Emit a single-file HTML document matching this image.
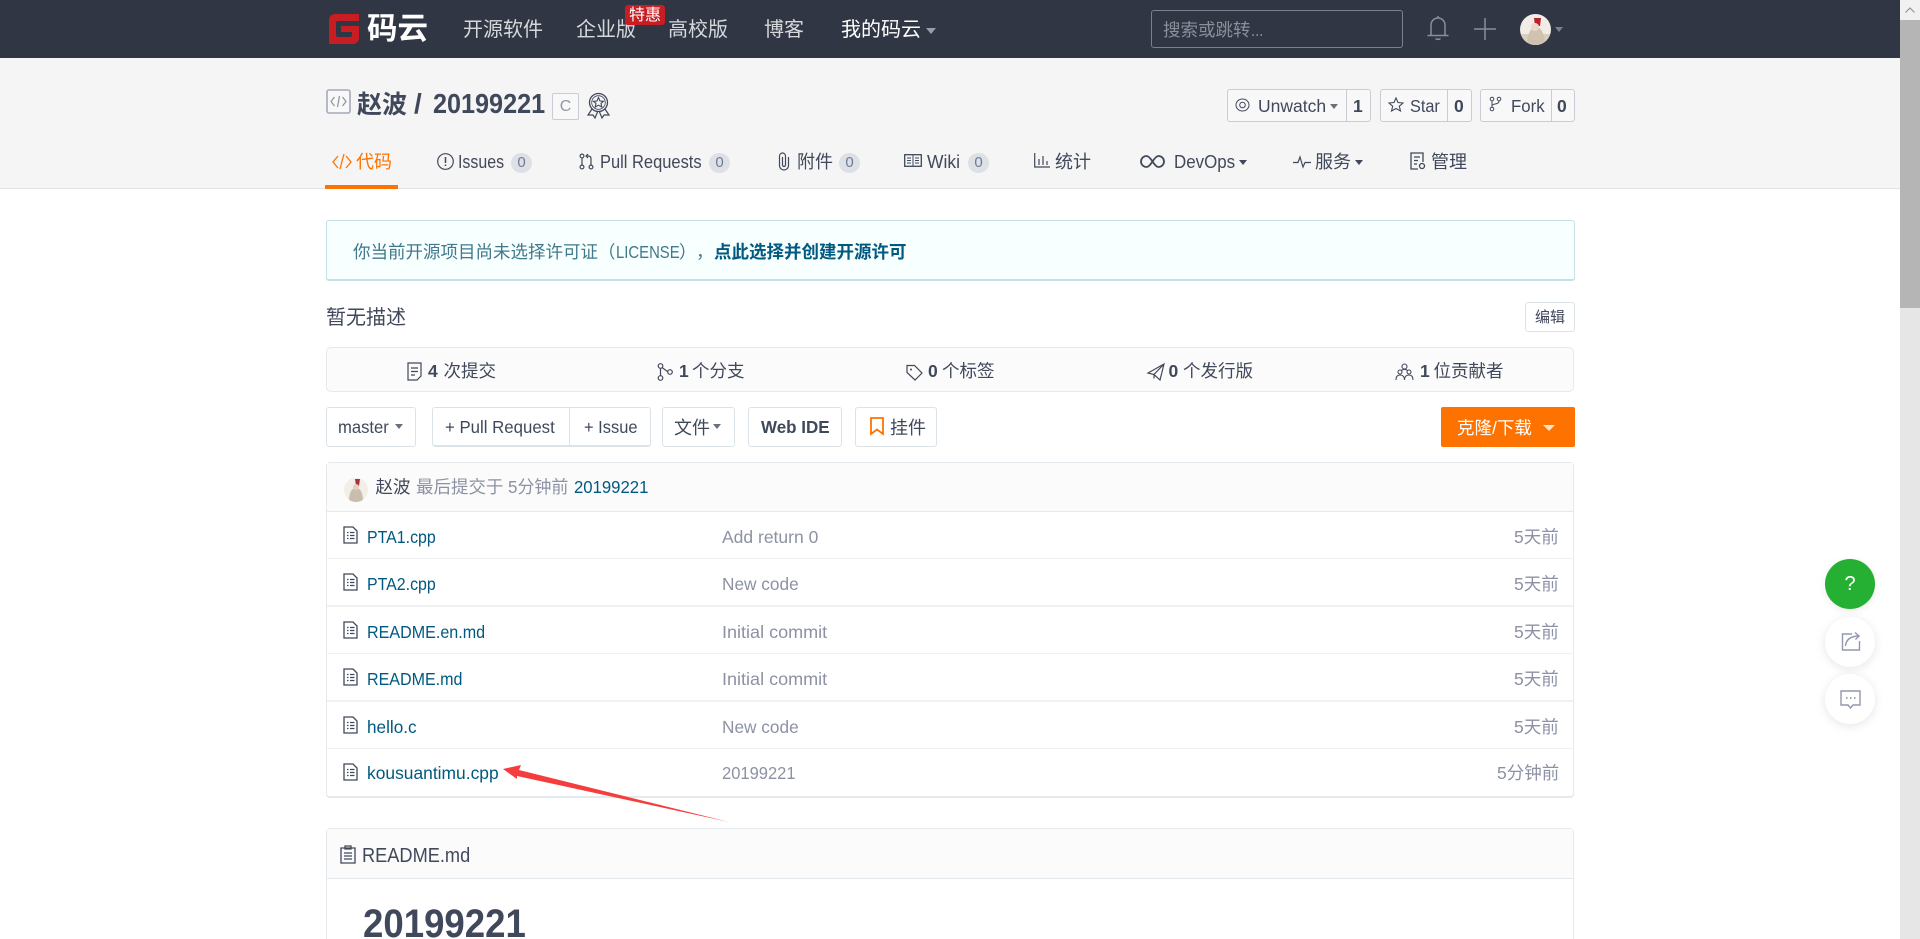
<!DOCTYPE html>
<html lang="zh-CN"><head><meta charset="utf-8"><title>赵波 / 20199221</title>
<style>
html,body{margin:0;padding:0;width:1920px;height:939px;overflow:hidden;background:#fff}
body{position:relative;font-family:"Liberation Sans","Noto Sans CJK SC",sans-serif;color:#40485b;font-size:17.5px}
.a,.t,svg.i{position:absolute}
.a{box-sizing:border-box}
.t{white-space:nowrap;line-height:1;transform-origin:0 50%}
svg.i{overflow:visible;fill:none}
.btn{position:absolute;box-sizing:border-box;background:#fff;border:1px solid #dce3e8;border-radius:3px}
.sbtn{position:absolute;box-sizing:border-box;background:#f8f8f8;border:1px solid #c9ccd6;border-radius:3px}
.car{position:absolute;width:0;height:0;border-left:4.5px solid transparent;border-right:4.5px solid transparent;border-top:5px solid #6a6f7c}
.bd{position:absolute;width:21px;height:20px;border-radius:50%;background:#dde0e5;color:#6f7c96;font-size:15px;line-height:20px;text-align:center}
.lnk{color:#005980}.gr{color:#8c92a4}
.line{position:absolute;left:327px;width:1246px;height:1px;background:#f0f1f3}
</style></head><body>
<svg width="0" height="0" style="position:absolute"><symbol id="file" viewBox="0 0 15 18"><path d="M1 1H10L14 5V17H1Z" fill="none" stroke="#40485b" stroke-width="1.3"/><path d="M4 6.5H5.5M7 6.5H11.5M4 9.5H5.5M7 9.5H11.5M4 12.5H5.5M7 12.5H11.5" stroke="#40485b" stroke-width="1.3" fill="none"/></symbol></svg>

<!-- top bar -->
<div class="a" style="left:0;top:0;width:1920px;height:58px;background:#303643"></div>
<svg class="i" style="left:329px;top:14px" width="30" height="30" viewBox="0 0 30 30"><path d="M6 0H30V7H9a2 2 0 0 0-2 2V21a2 2 0 0 0 2 2H21a2 2 0 0 0 2-2V18H12V12H30V24a6 6 0 0 1-6 6H0V6a6 6 0 0 1 6-6Z" fill="#c71d23"/></svg>
<div class="t" style="left:367px;top:14px;font-size:30.5px;font-weight:bold;color:#fff">码云</div>
<div class="t" style="left:463px;top:20px;font-size:20px;color:#d6d8dc">开源软件</div>
<div class="t" style="left:576px;top:20px;font-size:20px;color:#d6d8dc">企业版</div>
<div class="a" style="left:625px;top:5px;width:40px;height:20px;background:#c71d23;border-radius:3px"></div>
<div class="t" style="left:629px;top:7.5px;font-size:16px;color:#fff">特惠</div>
<div class="t" style="left:668px;top:20px;font-size:20px;color:#d6d8dc">高校版</div>
<div class="t" style="left:764px;top:20px;font-size:20px;color:#d6d8dc">博客</div>
<div class="t" style="left:841px;top:20px;font-size:20px;color:#fff">我的码云</div>
<div class="car" style="left:926px;top:28px;border-top-color:#9a9ea8;border-left-width:5px;border-right-width:5px;border-top-width:6px"></div>
<div class="a" style="left:1151px;top:10px;width:252px;height:38px;border:1px solid #7b808c;border-radius:3px"></div>
<div class="t" style="left:1163px;top:22px;font-size:17.5px;color:#8b8f9a">搜索或跳转</div>
<div class="t" style="left:1251px;top:22px;font-size:17.5px;color:#8b8f9a;transform:scaleX(.85)">...</div>
<svg class="i" style="left:1426px;top:15px" width="24" height="27" viewBox="0 0 24 27"><path d="M5 20V10a7 7 0 0 1 14 0V20M1.500 20.500H22.500M12 1V3M9.500 23.500a3 2 0 0 0 5 0" stroke="#8a8e9a" stroke-width="1.500"/></svg>
<svg class="i" style="left:1474px;top:18px" width="22" height="22" viewBox="0 0 22 22"><path d="M0 11H22M11 0V22" stroke="#8a8e9a" stroke-width="1.500"/></svg>
<svg class="i" style="left:1520px;top:14px" width="31" height="31" viewBox="0 0 31 31"><clipPath id="av1"><circle cx="15.500" cy="15.500" r="15.500"/></clipPath><g clip-path="url(#av1)"><rect width="31" height="31" fill="#f1ece6"/><rect x="0" y="20" width="31" height="11" fill="#d9cfc0"/><path d="M7 31C7 20 11 13 16 13S25 20 25 31Z" fill="#cfc3b0"/><path d="M14 4H21L20 12H15Z" fill="#b8222c"/><circle cx="15" cy="13" r="4" fill="#eed6c8"/></g></svg>
<div class="car" style="left:1555px;top:27px;border-top-color:#7b808c"></div>

<!-- project header -->
<div class="a" style="left:0;top:58px;width:1920px;height:131px;background:#f5f5f5;border-bottom:1.500px solid #e3e3e3"></div>
<svg class="i" style="left:326px;top:89px" width="25" height="25" viewBox="0 0 25 25"><rect x="1" y="1" width="23" height="23" rx="2" stroke="#a4aabb" stroke-width="1.600" fill="#f8f8f8"/><path d="M8.500 8L5 12.500L8.500 17M16.500 8L20 12.500L16.500 17M13.500 7L11.500 18" stroke="#8c92a4" stroke-width="1.200"/></svg>
<div class="t" style="left:357px;top:92.500px;font-size:25px;font-weight:bold">赵波</div>
<div class="t" style="left:414px;top:90px;font-size:28px;font-weight:bold">/</div>
<div class="t" style="left:432.500px;top:90px;font-size:28px;font-weight:bold;transform:scaleX(.9)">20199221</div>
<div class="a" style="left:552px;top:93px;width:27px;height:27px;border:1.500px solid #c9ccd6;border-radius:2px;background:#f8f8f8;color:#9298a8;font-size:16px;line-height:25px;text-align:center">C</div>
<svg class="i" style="left:586px;top:92px" width="25" height="27" viewBox="0 0 25 27"><circle cx="12.500" cy="10.500" r="9" stroke="#40485b" stroke-width="1.300"/><circle cx="12.500" cy="10.500" r="6.800" stroke="#40485b" stroke-width=".8"/><path d="M12.500 5.500L14 9L17.500 9.300L15 11.500L15.800 15L12.500 13.200L9.200 15L10 11.500L7.500 9.300L11 9Z" stroke="#40485b" stroke-width="1.100"/><path d="M6 17L2 23L7 23L9 26L11.500 20M19 17L23 23L18 23L16 26L13.500 20" stroke="#40485b" stroke-width="1.200"/></svg>

<!-- watch/star/fork -->
<div class="sbtn" style="left:1226.500px;top:89px;width:144px;height:33px"></div>
<div class="a" style="left:1345.500px;top:89px;width:1px;height:33px;background:#c9ccd6"></div>
<svg class="i" style="left:1235px;top:98px" width="15" height="14" viewBox="0 0 15 14"><ellipse cx="7.500" cy="7" rx="6.500" ry="6" stroke="#40485b"/><circle cx="7.500" cy="7" r="2.800" stroke="#40485b"/></svg>
<div class="t" style="left:1258px;top:98px">Unwatch</div>
<div class="car" style="left:1330px;top:104px"></div>
<div class="t" style="left:1353px;top:98px;font-weight:bold">1</div>
<div class="sbtn" style="left:1380px;top:89px;width:91.500px;height:33px"></div>
<div class="a" style="left:1447px;top:89px;width:1px;height:33px;background:#c9ccd6"></div>
<svg class="i" style="left:1388px;top:97px" width="16" height="15" viewBox="0 0 16 15"><path d="M8 1L10 5.500L15 6L11.300 9.200L12.500 14L8 11.500L3.500 14L4.700 9.200L1 6L6 5.500Z" stroke="#40485b" stroke-width="1.100"/></svg>
<div class="t" style="left:1410px;top:98px;transform:scaleX(.93)">Star</div>
<div class="t" style="left:1454px;top:98px;font-weight:bold">0</div>
<div class="sbtn" style="left:1480px;top:89px;width:95px;height:33px"></div>
<div class="a" style="left:1550.500px;top:89px;width:1px;height:33px;background:#c9ccd6"></div>
<svg class="i" style="left:1489px;top:96px" width="13" height="16" viewBox="0 0 13 16"><circle cx="3" cy="3" r="1.800" stroke="#40485b"/><circle cx="10" cy="3" r="1.800" stroke="#40485b"/><circle cx="3" cy="13" r="1.800" stroke="#40485b"/><path d="M3 5V11M10 5C10 9 3 7 3 10" stroke="#40485b"/></svg>
<div class="t" style="left:1510.500px;top:98px;transform:scaleX(.96)">Fork</div>
<div class="t" style="left:1557px;top:98px;font-weight:bold">0</div>

<!-- tabs -->
<div class="a" style="left:325px;top:185px;width:73px;height:4px;background:#fe7300"></div>
<svg class="i" style="left:332px;top:152px" width="20" height="19" viewBox="0 0 20 19"><path d="M6 4L1 10L6 16M14 4L19 10L14 16M12 2L8 17" stroke="#fe7300" stroke-width="1.300"/></svg>
<div class="t" style="left:356px;top:153px;font-size:18px;color:#fe7300">代码</div>
<svg class="i" style="left:437px;top:153px" width="17" height="17" viewBox="0 0 17 17"><circle cx="8.500" cy="8.500" r="7.800" stroke="#40485b" stroke-width="1.200"/><path d="M8.500 4V10M8.500 11.500V13" stroke="#40485b" stroke-width="1.500"/></svg>
<div class="t" style="left:458px;top:153px;font-size:18px;transform:scaleX(.885)">Issues</div>
<div class="bd" style="left:511px;top:152.500px">0</div>
<svg class="i" style="left:579px;top:153px" width="15" height="17" viewBox="0 0 15 17"><circle cx="3" cy="3" r="1.900" stroke="#40485b" stroke-width="1.200"/><circle cx="3" cy="14" r="1.900" stroke="#40485b" stroke-width="1.200"/><circle cx="12" cy="14" r="1.900" stroke="#40485b" stroke-width="1.200"/><path d="M3 5V12M12 12V5.500Q12 3 9 3H7M9 1L7 3L9 5" stroke="#40485b" stroke-width="1.200"/></svg>
<div class="t" style="left:600px;top:153px;font-size:18px;transform:scaleX(.915)">Pull Requests</div>
<div class="bd" style="left:709px;top:152.500px">0</div>
<svg class="i" style="left:778px;top:152px" width="12" height="19" viewBox="0 0 12 19"><path d="M10.500 5V13.500a4.500 4.500 0 0 1-9 0V4a3 3 0 0 1 6 0V13a1.500 1.500 0 0 1-3 0V5" stroke="#40485b" stroke-width="1.200"/></svg>
<div class="t" style="left:797px;top:153px;font-size:18px">附件</div>
<div class="bd" style="left:839px;top:152.500px">0</div>
<svg class="i" style="left:904px;top:154px" width="18" height="13" viewBox="0 0 18 13"><rect x=".7" y=".7" width="16.600" height="11.600" stroke="#40485b" stroke-width="1.300"/><path d="M9 1V12M3 4H7M3 6.500H7M3 9H7M11 4H15M11 6.500H15M11 9H15" stroke="#40485b"/></svg>
<div class="t" style="left:927px;top:153px;font-size:18px;transform:scaleX(.97)">Wiki</div>
<div class="bd" style="left:968px;top:152.500px">0</div>
<svg class="i" style="left:1034px;top:153px" width="16" height="15" viewBox="0 0 16 15"><path d="M.7 0V14H16M5 6V12M9 3V12M13 8V12" stroke="#40485b" stroke-width="1.200"/></svg>
<div class="t" style="left:1055px;top:153px;font-size:18px">统计</div>
<svg class="i" style="left:1141px;top:155px" width="23" height="13" viewBox="0 0 23 13"><path d="M11.500 6.500C8.500 1.800 7 1 5.500 1a5.500 5.500 0 0 0 0 11C7 12 8.500 11.200 11.500 6.500S16 1 17.500 1a5.500 5.500 0 0 1 0 11C16 12 14.500 11.200 11.500 6.500Z" stroke="#40485b" stroke-width="1.800"/></svg>
<div class="t" style="left:1174px;top:153px;font-size:18px;transform:scaleX(.94)">DevOps</div>
<div class="car" style="left:1239px;top:160px;border-top-color:#40485b"></div>
<svg class="i" style="left:1293px;top:156px" width="18" height="12" viewBox="0 0 18 12"><path d="M0 6.500H5L7 1L10 11L12 6.500H18" stroke="#40485b" stroke-width="1.200"/></svg>
<div class="t" style="left:1315px;top:153px;font-size:18px">服务</div>
<div class="car" style="left:1355px;top:160px;border-top-color:#40485b"></div>
<svg class="i" style="left:1410px;top:152px" width="16" height="18" viewBox="0 0 16 18"><path d="M8 17H1V1H13V10M4 5H10M4 8.500H8M4 12H7" stroke="#40485b" stroke-width="1.300"/><circle cx="12" cy="14" r="2.500" stroke="#40485b" stroke-width="1.300"/></svg>
<div class="t" style="left:1431px;top:153px;font-size:18px">管理</div>

<!-- license alert -->
<div class="a" style="left:326px;top:220px;width:1248.500px;height:61px;background:#f7ffff;border:1.500px solid #c5e0e6;border-bottom-width:2px;border-radius:3px"></div>
<div class="t" style="left:353px;top:244px;color:#40798c">你当前开源项目尚未选择许可证</div>
<div class="t" style="left:598px;top:244px;color:#40798c">（</div>
<div class="t" style="left:616px;top:244px;color:#40798c;transform:scaleX(.85)">LICENSE</div>
<div class="t" style="left:679px;top:244px;color:#40798c">）</div>
<div class="t" style="left:696px;top:244px;color:#40798c">，</div>
<div class="t lnk" style="left:714px;top:244px;font-weight:bold">点此选择并创建开源许可</div>

<!-- description -->
<div class="t" style="left:326px;top:307.500px;font-size:20px">暂无描述</div>
<div class="btn" style="left:1525px;top:302px;width:50px;height:30px;font-size:15px;line-height:29px;text-align:center">编辑</div>

<!-- stats -->
<div class="a" style="left:326px;top:347px;width:1248px;height:45px;background:#fbfbfb;border:1px solid #e6e9ed;border-radius:5px"></div>
<svg class="i" style="left:407px;top:362px" width="16" height="19" viewBox="0 0 16 19"><path d="M10 18H1V1H14V14L10 18ZM4 6H11M4 9.500H11M4 13H8" stroke="#40485b" stroke-width="1.200"/></svg>
<div class="t" style="left:428px;top:363px;font-weight:bold">4</div><div class="t" style="left:443.500px;top:363px">次提交</div>
<svg class="i" style="left:657px;top:363px" width="16" height="18" viewBox="0 0 16 18"><circle cx="3.500" cy="3" r="2.300" stroke="#40485b" stroke-width="1.200"/><circle cx="3.500" cy="15" r="2.300" stroke="#40485b" stroke-width="1.200"/><circle cx="13" cy="9" r="2.300" stroke="#40485b" stroke-width="1.200"/><path d="M3.500 5.500V12.500M5 4.500L10.500 8.500" stroke="#40485b" stroke-width="1.200"/></svg>
<div class="t" style="left:679px;top:363px;font-weight:bold">1</div><div class="t" style="left:692px;top:363px">个分支</div>
<svg class="i" style="left:906px;top:364px" width="17" height="17" viewBox="0 0 17 17"><path d="M1 1.500H8.500L16 9L9 16L1 8.500Z" stroke="#40485b" stroke-width="1.200"/><circle cx="5" cy="5.500" r="1" fill="#40485b"/></svg>
<div class="t" style="left:928px;top:363px;font-weight:bold">0</div><div class="t" style="left:942px;top:363px">个标签</div>
<svg class="i" style="left:1147px;top:363px" width="18" height="18" viewBox="0 0 18 18"><path d="M17 1L1 10L7 11.500L13 17ZM17 1L7 11.500V15.500" stroke="#40485b" stroke-width="1.200"/></svg>
<div class="t" style="left:1168.500px;top:363px;font-weight:bold">0</div><div class="t" style="left:1183px;top:363px">个发行版</div>
<svg class="i" style="left:1395px;top:363px" width="19" height="18" viewBox="0 0 19 18"><circle cx="9.500" cy="3.500" r="2.500" stroke="#40485b" stroke-width="1.100"/><circle cx="5" cy="9" r="2" stroke="#40485b" stroke-width="1.100"/><circle cx="14" cy="9" r="2" stroke="#40485b" stroke-width="1.100"/><path d="M1 17C1 13 3 12 5 12S9.500 13 9.500 17C9.500 13 12 12 14 12S18 13 18 17M6.500 7.500Q9.500 5 12.500 7.500" stroke="#40485b" stroke-width="1.100"/></svg>
<div class="t" style="left:1420px;top:363px;font-weight:bold">1</div><div class="t" style="left:1433.500px;top:363px">位贡献者</div>

<!-- action row -->
<div class="btn" style="left:325.500px;top:407px;width:90.500px;height:40px"></div>
<div class="t" style="left:338px;top:419px;transform:scaleX(.95)">master</div>
<div class="car" style="left:395px;top:424px"></div>
<div class="a" style="left:431.500px;top:407px;width:219.500px;height:40px;background:#fff;border:1.500px solid #dce3e8;border-bottom-width:2px;border-radius:3px"></div>
<div class="a" style="left:568.500px;top:407px;width:1.500px;height:40px;background:#dce3e8"></div>
<div class="t" style="left:445px;top:419px;transform:scaleX(.96)">+ Pull Request</div>
<div class="t" style="left:584px;top:419px;transform:scaleX(.94)">+ Issue</div>
<div class="btn" style="left:662px;top:407px;width:73px;height:40px"></div>
<div class="t" style="left:674px;top:419px;font-size:18px">文件</div>
<div class="car" style="left:713px;top:424px"></div>
<div class="btn" style="left:748px;top:407px;width:94px;height:40px"></div>
<div class="t" style="left:760.500px;top:419px;font-weight:bold;transform:scaleX(.97)">Web IDE</div>
<div class="btn" style="left:855px;top:407px;width:82px;height:40px"></div>
<svg class="i" style="left:870px;top:417px" width="14" height="18" viewBox="0 0 14 18"><path d="M1 1H13V17L7 12.500L1 17Z" stroke="#fe7300" stroke-width="1.800"/></svg>
<div class="t" style="left:890px;top:419px;font-size:18px">挂件</div>
<div class="a" style="left:1441px;top:407px;width:134px;height:40px;background:#fe7300;border-radius:2px"></div>
<div class="t" style="left:1457px;top:420px;color:#fff">克隆/下载</div>
<div class="car" style="left:1543px;top:425px;border-top:6px solid #ffe3c8;border-left-width:6px;border-right-width:6px"></div>

<!-- file list -->
<div class="a" style="left:326px;top:462px;width:1248px;height:336px;border:1px solid #e3e9ed;border-bottom-width:2px;border-radius:4px"></div>
<div class="a" style="left:327px;top:463px;width:1246px;height:48.500px;background:#fbfbfb;border-bottom:1.500px solid #e3e9ed"></div>
<svg class="i" style="left:344px;top:478px" width="24" height="24" viewBox="0 0 24 24"><clipPath id="av2"><circle cx="12" cy="12" r="12"/></clipPath><g clip-path="url(#av2)"><rect width="24" height="24" fill="#f3eee8"/><path d="M5 24C5 14 8 10 12 10S19 14 19 24Z" fill="#c9bdad"/><path d="M11 1H16L15 8H12Z" fill="#a8333a"/><circle cx="12" cy="9" r="3" fill="#e5cfc2"/></g></svg>
<div class="t" style="left:375.500px;top:479px">赵波</div>
<div class="t gr" style="left:416px;top:479px">最后提交于</div>
<div class="t gr" style="left:507.500px;top:479px;transform:scaleX(.97)">5分钟前</div>
<div class="t lnk" style="left:574px;top:479px;transform:scaleX(.955)">20199221</div>

<div class="line" style="top:558px"></div><div class="line" style="top:605px;height:2px"></div><div class="line" style="top:653px"></div><div class="line" style="top:700px;height:2px"></div><div class="line" style="top:748px"></div>

<svg class="i" style="left:343px;top:526px" width="15" height="18"><use href="#file"/></svg>
<div class="t lnk" style="left:366.500px;top:529px;transform:scaleX(.91)">PTA1.cpp</div>
<div class="t gr" style="left:722px;top:529px">Add return 0</div>
<div class="t gr" style="left:1514px;top:529px">5天前</div>

<svg class="i" style="left:343px;top:573px" width="15" height="18"><use href="#file"/></svg>
<div class="t lnk" style="left:366.500px;top:576px;transform:scaleX(.91)">PTA2.cpp</div>
<div class="t gr" style="left:722px;top:576px;transform:scaleX(.985)">New code</div>
<div class="t gr" style="left:1514px;top:576px">5天前</div>

<svg class="i" style="left:343px;top:621px" width="15" height="18"><use href="#file"/></svg>
<div class="t lnk" style="left:366.500px;top:624px;transform:scaleX(.92)">README.en.md</div>
<div class="t gr" style="left:722px;top:624px;transform:scaleX(1.03)">Initial commit</div>
<div class="t gr" style="left:1514px;top:624px">5天前</div>

<svg class="i" style="left:343px;top:668px" width="15" height="18"><use href="#file"/></svg>
<div class="t lnk" style="left:366.500px;top:671px;transform:scaleX(.917)">README.md</div>
<div class="t gr" style="left:722px;top:671px;transform:scaleX(1.03)">Initial commit</div>
<div class="t gr" style="left:1514px;top:671px">5天前</div>

<svg class="i" style="left:343px;top:716px" width="15" height="18"><use href="#file"/></svg>
<div class="t lnk" style="left:366.500px;top:719px;transform:scaleX(.98)">hello.c</div>
<div class="t gr" style="left:722px;top:719px;transform:scaleX(.985)">New code</div>
<div class="t gr" style="left:1514px;top:719px">5天前</div>

<svg class="i" style="left:343px;top:763px" width="15" height="18"><use href="#file"/></svg>
<div class="t lnk" style="left:366.500px;top:765px;transform:scaleX(.995)">kousuantimu.cpp</div>
<div class="t gr" style="left:722px;top:765px;transform:scaleX(.945)">20199221</div>
<div class="t gr" style="left:1497px;top:765px">5分钟前</div>

<!-- readme -->
<div class="a" style="left:326px;top:828px;width:1248px;height:120px;border:1px solid #e3e9ed;border-radius:4px"></div>
<div class="a" style="left:327px;top:829px;width:1246px;height:50px;background:#fbfbfb;border-bottom:1.500px solid #e3e9ed"></div>
<svg class="i" style="left:340px;top:845px" width="16" height="19" viewBox="0 0 16 19"><path d="M1 3H15V18H1ZM5 1H11V4H5ZM4 8H12M4 11H12M4 14H12" stroke="#40485b" stroke-width="1.300"/></svg>
<div class="t" style="left:362px;top:846px;font-size:20px;transform:scaleX(.91)">README.md</div>
<div class="t" style="left:362.500px;top:904px;font-size:40px;font-weight:bold;transform:scaleX(.915)">20199221</div>

<!-- annotation arrow -->
<svg class="i" style="left:0;top:0" width="1920" height="939" viewBox="0 0 1920 939"><path d="M503 769L521 765L519 770L729 822L517 776L517 779Z" fill="#f63d3d"/></svg>

<!-- floating buttons -->
<div class="a" style="left:1825px;top:559px;width:50px;height:50px;border-radius:50%;background:#25b033;box-shadow:0 2px 8px rgba(0,0,0,.08);color:#fff;font-size:20px;line-height:50px;text-align:center">?</div>
<div class="a" style="left:1825px;top:617px;width:50px;height:50px;border-radius:50%;background:#fff;box-shadow:0 2px 10px rgba(0,0,0,.1)"></div>
<svg class="i" style="left:1841px;top:631px" width="20" height="20" viewBox="0 0 20 20"><path d="M11 3H1.500V19H18.500V10M4.500 15C5 9 9 5.500 17 5M14 1.500L18 5L14.500 8.500" stroke="#9297ad" stroke-width="1.400"/></svg>
<div class="a" style="left:1825px;top:674px;width:50px;height:50px;border-radius:50%;background:#fff;box-shadow:0 2px 10px rgba(0,0,0,.1)"></div>
<svg class="i" style="left:1840px;top:690px" width="21" height="19" viewBox="0 0 21 19"><path d="M1 1H20V15H13L10.500 18L8 15H1Z" stroke="#9297ad" stroke-width="1.400"/><path d="M6 8H7.500M10 8H11.500M14 8H15.500" stroke="#9297ad" stroke-width="1.800"/></svg>

<!-- scrollbar -->
<div class="a" style="left:1900px;top:0;width:20px;height:939px;background:#e6e6e6"></div>
<div class="a" style="left:1900px;top:0;width:20px;height:20px;background:#f1f1f1"></div>
<svg class="i" style="left:1905px;top:7px" width="10" height="6" viewBox="0 0 10 6"><path d="M.5 5.500L5 1L9.500 5.500" stroke="#8a8a8a"/></svg>
<div class="a" style="left:1900px;top:20px;width:20px;height:288px;background:#b5b5b5"></div>
</body></html>
